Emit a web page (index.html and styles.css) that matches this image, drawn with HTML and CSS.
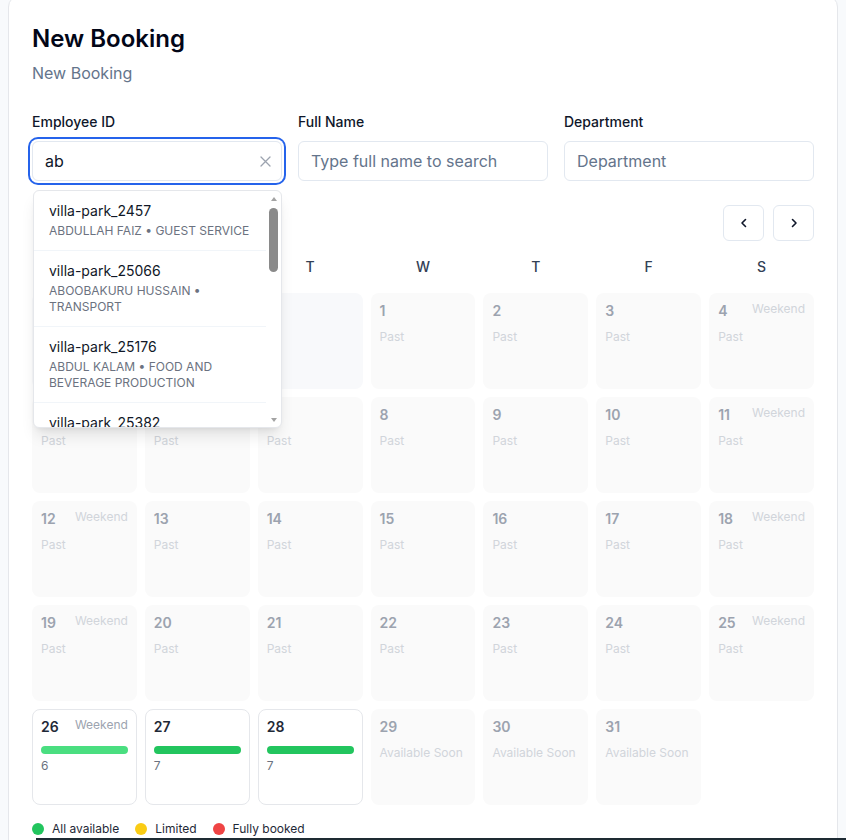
FILE: index.html
```html
<!DOCTYPE html>
<html lang="en">

<head>
	<meta charset="UTF-8">
	<meta name="viewport" content="width=device-width, initial-scale=1.0">
	<title>New Booking</title>
	<link rel="stylesheet" href="styles.css">
</head>

<body>

	<div class="page">
		<div class="card">
			<h1 class="title">New Booking</h1>
			<p class="subtitle">New Booking</p>

			<div class="fields">
				<div class="field">
					<label class="field-label">Employee ID</label>
					<div class="search">
						<input class="input input-active" type="text" value="ab">
						<button class="clear-btn" type="button">
							<svg width="11" height="11" viewBox="0 0 11 11"><path d="M1 1l9 9M10 1l-9 9" stroke="#9ca3af" stroke-width="1.3" stroke-linecap="round" fill="none"/></svg>
						</button>
						<div class="suggestions">
							<ul class="suggestion-list">
								<li class="suggestion">
									<div class="suggestion-id">villa-park_2457</div>
									<div class="suggestion-meta">Abdullah Faiz • Guest Service</div>
								</li>
								<li class="suggestion">
									<div class="suggestion-id">villa-park_25066</div>
									<div class="suggestion-meta">Aboobakuru Hussain • Transport</div>
								</li>
								<li class="suggestion">
									<div class="suggestion-id">villa-park_25176</div>
									<div class="suggestion-meta">Abdul Kalam • Food and Beverage Production</div>
								</li>
								<li class="suggestion">
									<div class="suggestion-id">villa-park_25382</div>
									<div class="suggestion-meta">Abdulla Shareef • Housekeeping</div>
								</li>
								<li class="suggestion">
									<div class="suggestion-id">villa-park_25419</div>
									<div class="suggestion-meta">Abdul Rasheed • Security</div>
								</li>
							</ul>
							<div class="scrollbar">
								<span class="sb-arrow sb-up"></span>
								<span class="sb-thumb"></span>
								<span class="sb-track"></span>
								<span class="sb-arrow sb-down"></span>
							</div>
						</div>
					</div>
				</div>
				<div class="field">
					<label class="field-label">Full Name</label>
					<input class="input" type="text" placeholder="Type full name to search">
				</div>
				<div class="field">
					<label class="field-label">Department</label>
					<input class="input" type="text" placeholder="Department">
				</div>
			</div>

			<div class="calendar">
				<div class="calendar-head">
					<div class="nav">
						<button class="nav-btn" type="button">
							<svg width="10" height="10" viewBox="0 0 10 10"><path d="M6.5 1.5L3 5l3.5 3.5" stroke="#0f172a" stroke-width="1.6" stroke-linecap="round" stroke-linejoin="round" fill="none"/></svg>
						</button>
						<button class="nav-btn" type="button">
							<svg width="10" height="10" viewBox="0 0 10 10"><path d="M3.5 1.5L7 5 3.5 8.5" stroke="#0f172a" stroke-width="1.6" stroke-linecap="round" stroke-linejoin="round" fill="none"/></svg>
						</button>
					</div>
				</div>
				<div class="weekdays">
					<span>S</span><span>M</span><span>T</span><span>W</span><span>T</span><span>F</span><span>S</span>
				</div>
				<div class="days"></div>
			</div>

			<div class="legend">
				<span class="legend-item"><i class="dot dot-green"></i>All available</span>
				<span class="legend-item"><i class="dot dot-yellow"></i>Limited</span>
				<span class="legend-item"><i class="dot dot-red"></i>Fully booked</span>
			</div>
		</div>
	</div>

	<div class="bottom-bar"></div>

	<script>
		// Build the month grid: the 1st falls on a Wednesday
		const grid = document.querySelector('.days');
		const offset = 3;
		const totalDays = 31;
		const open = {
			26: { count: 6, light: true },
			27: { count: 7 },
			28: { count: 7 }
		};

		for (let i = 0; i < offset; i++) {
			const blank = document.createElement('div');
			blank.className = 'day day-empty';
			grid.appendChild(blank);
		}

		for (let d = 1; d <= totalDays; d++) {
			const col = (offset + d - 1) % 7;
			const weekend = col === 0 || col === 6;
			const cell = document.createElement('div');
			let body = '';

			if (open[d]) {
				cell.className = 'day day-open';
				body = `<div class="day-bar${open[d].light ? ' day-bar-light' : ''}"></div>
					<div class="day-count">${open[d].count}</div>`;
			} else {
				cell.className = 'day day-off';
				body = `<div class="day-note">${d > 28 ? 'Available Soon' : 'Past'}</div>`;
			}

			cell.innerHTML = `<div class="day-top">
					<span class="day-num">${d}</span>
					${weekend ? '<span class="day-tag">Weekend</span>' : ''}
				</div>` + body;
			grid.appendChild(cell);
		}
	</script>

</body>

</html>
```

FILE: styles.css
```css
body {
	margin: 0;
	background-color: #f8fafc;
	font-family: Inter, "Noto Sans", sans-serif;
	color: #0f172a;
}

.page {
	padding: 0 8px;
}

.card {
	margin-top: -5px;
	background-color: #fff;
	border: 1px solid #e5e7eb;
	border-radius: 12px;
	padding: 27px 23px 24px;
}

.title {
	margin: 0;
	font-size: 24px;
	line-height: 32px;
	font-weight: 600;
	color: #020617;
}

.subtitle {
	margin: 6px 0 0;
	font-size: 16px;
	line-height: 24px;
	color: #64748b;
}

/* Search fields */

.fields {
	display: grid;
	grid-template-columns: repeat(3, 1fr);
	gap: 16px;
	margin-top: 27px;
}

.field {
	display: flex;
	flex-direction: column;
}

.field-label {
	font-size: 14px;
	line-height: 20px;
	font-weight: 500;
	color: #0f172a;
	margin-bottom: 9px;
}

.search {
	position: relative;
}

.input {
	width: 100%;
	height: 40px;
	box-sizing: border-box;
	border: 1px solid #e2e8f0;
	border-radius: 6px;
	padding: 0 12px;
	font-family: inherit;
	font-size: 16px;
	color: #0f172a;
	background-color: #fff;
	outline: none;
}

.input::placeholder {
	color: #64748b;
}

.input-active {
	box-shadow: 0 0 0 2px #fff, 0 0 0 4px #2563eb;
}

.clear-btn {
	position: absolute;
	right: 11px;
	top: 15px;
	padding: 0;
	border: none;
	background: none;
	display: flex;
}

/* Suggestions dropdown */

.suggestions {
	position: absolute;
	top: 49px;
	left: 1px;
	right: 0;
	z-index: 10;
	height: 236px;
	display: flex;
	overflow: hidden;
	background-color: #fff;
	border: 1px solid #e5e7eb;
	border-radius: 6px;
	box-shadow: 0 10px 15px -3px rgba(0, 0, 0, 0.1), 0 4px 6px -4px rgba(0, 0, 0, 0.1);
}

.suggestion-list {
	flex: 1;
	margin: 0;
	padding: 0;
	list-style: none;
	overflow: hidden;
}

.suggestion {
	padding: 10px 10px 11px 15px;
	border-bottom: 1px solid #f1f5f9;
}

.suggestion-id {
	font-size: 14px;
	line-height: 20px;
	color: #111827;
}

.suggestion-meta {
	margin-top: 2px;
	font-size: 12px;
	line-height: 16px;
	color: #6b7280;
	text-transform: uppercase;
}

.scrollbar {
	width: 15px;
	display: flex;
	flex-direction: column;
	align-items: center;
}

.sb-arrow {
	height: 15px;
	display: flex;
	align-items: center;
}

.sb-up::before,
.sb-down::before {
	content: "";
	border-left: 3.5px solid transparent;
	border-right: 3.5px solid transparent;
}

.sb-up::before {
	border-bottom: 4px solid #a3a3a3;
}

.sb-down::before {
	border-top: 4px solid #a3a3a3;
}

.sb-thumb {
	width: 9px;
	height: 64px;
	margin-top: 2px;
	border-radius: 5px;
	background-color: #8a8a8a;
}

.sb-track {
	flex: 1;
}

/* Calendar */

.calendar {
	margin-top: 24px;
}

.calendar-head {
	display: flex;
	justify-content: flex-end;
	align-items: center;
}

.nav {
	display: flex;
	gap: 9px;
}

.nav-btn {
	width: 41px;
	height: 36px;
	display: flex;
	align-items: center;
	justify-content: center;
	background-color: #fff;
	border: 1px solid #e2e8f0;
	border-radius: 6px;
	padding: 0;
}

.weekdays {
	display: grid;
	grid-template-columns: repeat(7, 1fr);
	gap: 8px;
	margin-top: 16px;
	text-align: center;
	font-size: 14px;
	line-height: 20px;
	font-weight: 500;
	color: #334155;
}

.days {
	display: grid;
	grid-template-columns: repeat(7, 1fr);
	grid-auto-rows: 96px;
	gap: 8px;
	margin-top: 16px;
}

.day {
	box-sizing: border-box;
	min-width: 0;
	border: 1px solid transparent;
	border-radius: 8px;
	padding: 7px 8px;
	background-color: #fafafa;
}

.day-empty {
	background-color: #f8f9fb;
}

.day-open {
	background-color: #fff;
	border-color: #e5e7eb;
}

.day-top {
	display: flex;
	justify-content: space-between;
	align-items: flex-start;
}

.day-num {
	font-size: 14px;
	line-height: 20px;
	font-weight: 600;
	color: #9ca3af;
}

.day-open .day-num {
	color: #1f2937;
}

.day-tag {
	font-size: 12px;
	line-height: 16px;
	color: #d1d5db;
}

.day-open .day-tag {
	color: #9ca3af;
}

.day-note {
	margin-top: 8px;
	font-size: 12px;
	line-height: 16px;
	color: #d1d5db;
	white-space: nowrap;
}

.day-bar {
	height: 8px;
	margin-top: 9px;
	border-radius: 4px;
	background-color: #22c55e;
}

.day-bar-light {
	background-color: #4ade80;
}

.day-count {
	margin-top: 4px;
	font-size: 12px;
	line-height: 16px;
	color: #6b7280;
}

/* Legend */

.legend {
	display: flex;
	gap: 16px;
	margin-top: 16px;
	font-size: 12px;
	line-height: 16px;
	color: #1f2937;
}

.legend-item {
	display: flex;
	align-items: center;
	gap: 8px;
}

.dot {
	width: 12px;
	height: 12px;
	border-radius: 50%;
}

.dot-green {
	background-color: #22c55e;
}

.dot-yellow {
	background-color: #facc15;
}

.dot-red {
	background-color: #ef4444;
}

.bottom-bar {
	position: fixed;
	left: 36px;
	right: 0;
	bottom: 0;
	height: 2px;
	background-color: #1e2b33;
}
```
